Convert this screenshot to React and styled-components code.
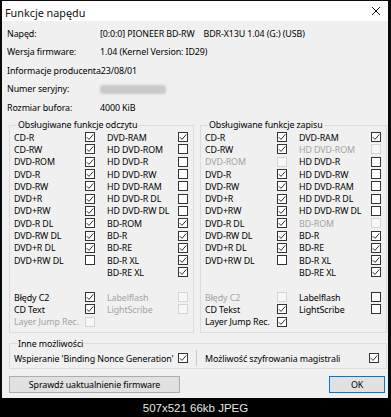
import React from 'react';
import styled, { createGlobalStyle } from 'styled-components';

const GlobalStyle = createGlobalStyle`
    html, body {
        margin: 0;
        padding: 0;
        background: #000;
    }
    body {
        font-family: "Noto Sans", "DejaVu Sans", sans-serif;
        font-size: 8.9px;
        letter-spacing: -0.1px;
        color: #000;
    }
`;

const readRows = [
    [['CD-R', 'on'], ['DVD-RAM', 'on']],
    [['CD-RW', 'on'], ['HD DVD-ROM', 'off']],
    [['DVD-ROM', 'on'], ['HD DVD-R', 'off']],
    [['DVD-R', 'on'], ['HD DVD-RW', 'off']],
    [['DVD-RW', 'on'], ['HD DVD-RAM', 'off']],
    [['DVD+R', 'on'], ['HD DVD-R DL', 'off']],
    [['DVD+RW', 'on'], ['HD DVD-RW DL', 'off']],
    [['DVD-R DL', 'on'], ['BD-ROM', 'on']],
    [['DVD-RW DL', 'on'], ['BD-R', 'on']],
    [['DVD+R DL', 'on'], ['BD-RE', 'on']],
    [['DVD+RW DL', 'off'], ['BD-R XL', 'on']],
    [null, ['BD-RE XL', 'on']],
];

const writeRows = [
    [['CD-R', 'on'], ['DVD-RAM', 'on']],
    [['CD-RW', 'on'], ['HD DVD-ROM', 'dis']],
    [['DVD-ROM', 'dis'], ['HD DVD-R', 'off']],
    [['DVD-R', 'on'], ['HD DVD-RW', 'off']],
    [['DVD-RW', 'on'], ['HD DVD-RAM', 'off']],
    [['DVD+R', 'on'], ['HD DVD-R DL', 'off']],
    [['DVD+RW', 'on'], ['HD DVD-RW DL', 'off']],
    [['DVD-R DL', 'on'], ['BD-ROM', 'dis']],
    [['DVD-RW DL', 'on'], ['BD-R', 'on']],
    [['DVD+R DL', 'on'], ['BD-RE', 'on']],
    [['DVD+RW DL', 'off'], ['BD-R XL', 'on']],
    [null, ['BD-RE XL', 'on']],
];

const readExtra = [
    [['Błędy C2', 'on'], ['Labelflash', 'dis']],
    [['CD Text', 'on'], ['LightScribe', 'dis']],
    [['Layer Jump Rec.', 'dis'], null],
];

const writeExtra = [
    [['Błędy C2', 'dis'], ['Labelflash', 'off']],
    [['CD Tekst', 'on'], ['LightScribe', 'off']],
    [['Layer Jump Rec.', 'on'], null],
];

function CheckBox({ state }) {
    return (
        <Box $disabled={state === 'dis'}>
            {state === 'on' && (
                <svg width="8" height="8" viewBox="0 0 8 8">
                    <polyline points="0.8,4.2 3,6.4 7.3,1.4" fill="none" stroke="#222" strokeWidth="0.95" />
                </svg>
            )}
        </Box>
    );
}

function Option({ item }) {
    if (!item) return <span />;
    const [label, state] = item;
    return (
        <OptionRow>
            <OptionLabel $disabled={state === 'dis'}>{label}</OptionLabel>
            <CheckBox state={state} />
        </OptionRow>
    );
}

function OptionGrid({ rows }) {
    return (
        <Grid>
            {rows.map((row, i) => (
                <React.Fragment key={i}>
                    <Option item={row[0]} />
                    <Option item={row[1]} />
                </React.Fragment>
            ))}
        </Grid>
    );
}

function App() {
    return (
        <>
            <GlobalStyle />
            <Frame>
                <Dialog>
                    <TitleBar>
                        <Title>Funkcje napędu</Title>
                        <Close>
                            <svg width="10" height="10" viewBox="0 0 10 10">
                                <path d="M1 1 L9 9 M9 1 L1 9" stroke="#111" strokeWidth="1" />
                            </svg>
                        </Close>
                    </TitleBar>
                    <Body>
                        <Info>
                            <InfoRow><InfoLabel>Napęd:</InfoLabel><span>[0:0:0] PIONEER BD-RW&nbsp;&nbsp;&nbsp; BDR-X13U 1.04 (G:) (USB)</span></InfoRow>
                            <InfoRow><InfoLabel>Wersja firmware:</InfoLabel><span>1.04 (Kernel Version: ID29)</span></InfoRow>
                            <InfoRow><InfoLabel>Informacje producenta</InfoLabel><span>23/08/01</span></InfoRow>
                            <InfoRow><InfoLabel>Numer seryjny:</InfoLabel><Blurred /></InfoRow>
                            <InfoRow><InfoLabel>Rozmiar bufora:</InfoLabel><span>4000 KiB</span></InfoRow>
                        </Info>
                        <Groups>
                            <Group>
                                <Legend>Obsługiwane funkcje odczytu</Legend>
                                <OptionGrid rows={readRows} />
                                <Spacer />
                                <OptionGrid rows={readExtra} />
                            </Group>
                            <Group>
                                <Legend>Obsługiwane funkcje zapisu</Legend>
                                <OptionGrid rows={writeRows} />
                                <Spacer />
                                <OptionGrid rows={writeExtra} />
                            </Group>
                        </Groups>
                        <OtherGroup>
                            <Legend>Inne możliwości</Legend>
                            <OtherRow>
                                <Option item={["Wspieranie 'Binding Nonce Generation'", 'on']} />
                                <Separator />
                                <Option item={['Możliwość szyfrowania magistrali', 'on']} />
                            </OtherRow>
                        </OtherGroup>
                        <Buttons>
                            <Button $width="171px">Sprawdź uaktualnienie firmware</Button>
                            <Button $width="56px" $primary>OK</Button>
                        </Buttons>
                    </Body>
                </Dialog>
                <Caption>507x521 66kb JPEG</Caption>
            </Frame>
        </>
    );
}

const Frame = styled.div`
    width: 391px;
    height: 417px;
    background: #0a0a0a;
    display: flex;
    flex-direction: column;
    padding-top: 1px;
    box-sizing: border-box;
    overflow: hidden;
`;

const Dialog = styled.div`
    margin: 0 3px 0 2px;
    height: 397px;
    background: #f0f0f0;
    display: flex;
    flex-direction: column;
`;

const TitleBar = styled.div`
    height: 20px;
    background: #fff;
    display: flex;
    align-items: center;
    justify-content: space-between;
    padding: 0 6px 0 3px;
`;

const Title = styled.span`
    font-size: 10.8px;
    letter-spacing: 0;
    color: #111;
    margin-top: 2px;
`;

const Close = styled.span`
    display: flex;
    margin-right: 1px;
`;

const Body = styled.div`
    padding: 3px 1px 0 5px;
    display: flex;
    flex-direction: column;
`;

const Info = styled.div`
    display: flex;
    flex-direction: column;
`;

const InfoRow = styled.div`
    height: 18.5px;
    display: flex;
    align-items: center;
    white-space: nowrap;
`;

const InfoLabel = styled.span`
    min-width: 93px;
`;

const Blurred = styled.span`
    width: 66px;
    height: 9px;
    margin-top: 1px;
    border-radius: 3px;
    background: #c9c9c9;
    filter: blur(0.8px);
`;

const Groups = styled.div`
    display: grid;
    grid-template-columns: 185px 187px;
    column-gap: 6px;
    margin: 2.5px 0 0 2px;
`;

const Group = styled.fieldset`
    margin: 0;
    padding: 0 5px 4px 4px;
    border: 1px solid #dcdcdc;
    min-width: 0;
`;

const Legend = styled.legend`
    padding: 0 1px;
    margin-left: 3px;
    line-height: 12px;
    white-space: nowrap;
`;

const Grid = styled.div`
    display: grid;
    grid-template-columns: 1fr 1fr;
    column-gap: 12px;
    grid-auto-rows: 12.3px;
    align-items: center;
`;

const Spacer = styled.div`
    height: 12.3px;
`;

const OptionRow = styled.div`
    display: flex;
    align-items: center;
    justify-content: space-between;
    white-space: nowrap;
`;

const OptionLabel = styled.span`
    color: ${p => (p.$disabled ? '#a3a3a3' : '#000')};
`;

const Box = styled.span`
    width: 10px;
    height: 10px;
    box-sizing: border-box;
    border: 1px solid ${p => (p.$disabled ? '#d4d4d4' : '#333')};
    background: ${p => (p.$disabled ? '#f7f7f7' : '#fff')};
    display: flex;
    align-items: center;
    justify-content: center;
    flex-shrink: 0;
`;

const OtherGroup = styled(Group)`
    margin: 5px 0 0 2px;
    padding: 0 7px 1px 4px;
`;

const OtherRow = styled.div`
    display: flex;
    align-items: center;
    height: 17px;

    & > div {
        flex: 1;
    }
`;

const Separator = styled.span`
    width: 1px;
    height: 16px;
    background: #c8c8c8;
    margin: 0 8px;
`;

const Buttons = styled.div`
    display: flex;
    justify-content: space-between;
    margin: 7px 2px 0 2px;
`;

const Button = styled.button`
    width: ${p => p.$width};
    height: 17px;
    padding: 0;
    font-family: inherit;
    font-size: 8.9px;
    letter-spacing: -0.1px;
    color: #000;
    background: #e1e1e1;
    border: ${p => (p.$primary ? '1.5px solid #0078d7' : '1px solid #adadad')};
`;

const Caption = styled.div`
    flex: 1;
    display: flex;
    align-items: center;
    justify-content: center;
    font-family: "Liberation Sans", Arial, sans-serif;
    font-size: 11.5px;
    letter-spacing: 0;
    color: #e6e6e6;
    background: #000;
`;

export default App;
